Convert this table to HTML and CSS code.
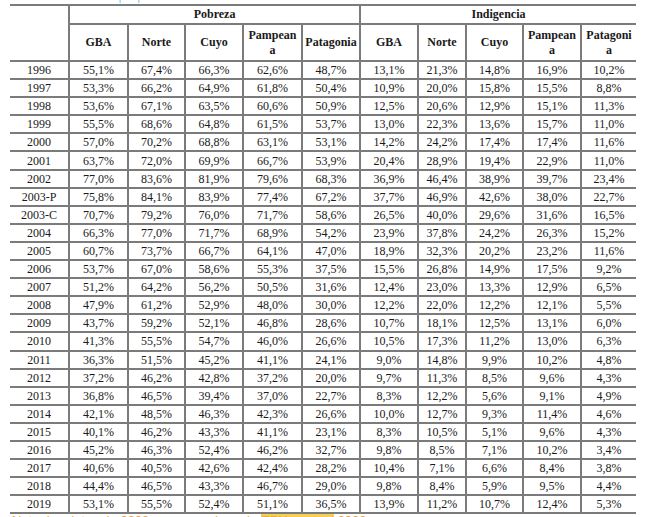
FILE: index.html
```html
<!DOCTYPE html>
<html lang="es">
<head>
<meta charset="utf-8">
<title>Pobreza e Indigencia</title>
<link rel="stylesheet" href="styles.css">
</head>
<body>
<div class="clip-top"><span>Fuente: elaboración propia en base a datos de la EPH - INDEC</span></div>
<table class="data">
<colgroup>
<col style="width:59px"><col style="width:59px"><col style="width:57px"><col style="width:58px"><col style="width:59px"><col style="width:58px">
<col style="width:58px"><col style="width:48px"><col style="width:57px"><col style="width:58px"><col style="width:55px">
</colgroup>
<thead>
<tr class="h1">
<th rowspan="2" class="first"></th>
<th colspan="5">Pobreza</th>
<th colspan="5">Indigencia</th>
</tr>
<tr class="h2">
<th>GBA</th><th>Norte</th><th>Cuyo</th><th>Pampean<br>a</th><th>Patagonia</th>
<th>GBA</th><th>Norte</th><th>Cuyo</th><th>Pampean<br>a</th><th>Patagoni<br>a</th>
</tr>
</thead>
<tbody>
<tr><td class="first">1996</td><td>55,1%</td><td>67,4%</td><td>66,3%</td><td>62,6%</td><td>48,7%</td><td>13,1%</td><td>21,3%</td><td>14,8%</td><td>16,9%</td><td>10,2%</td></tr>
<tr><td class="first">1997</td><td>53,3%</td><td>66,2%</td><td>64,9%</td><td>61,8%</td><td>50,4%</td><td>10,9%</td><td>20,0%</td><td>15,8%</td><td>15,5%</td><td>8,8%</td></tr>
<tr><td class="first">1998</td><td>53,6%</td><td>67,1%</td><td>63,5%</td><td>60,6%</td><td>50,9%</td><td>12,5%</td><td>20,6%</td><td>12,9%</td><td>15,1%</td><td>11,3%</td></tr>
<tr><td class="first">1999</td><td>55,5%</td><td>68,6%</td><td>64,8%</td><td>61,5%</td><td>53,7%</td><td>13,0%</td><td>22,3%</td><td>13,6%</td><td>15,7%</td><td>11,0%</td></tr>
<tr><td class="first">2000</td><td>57,0%</td><td>70,2%</td><td>68,8%</td><td>63,1%</td><td>53,1%</td><td>14,2%</td><td>24,2%</td><td>17,4%</td><td>17,4%</td><td>11,6%</td></tr>
<tr><td class="first">2001</td><td>63,7%</td><td>72,0%</td><td>69,9%</td><td>66,7%</td><td>53,9%</td><td>20,4%</td><td>28,9%</td><td>19,4%</td><td>22,9%</td><td>11,0%</td></tr>
<tr><td class="first">2002</td><td>77,0%</td><td>83,6%</td><td>81,9%</td><td>79,6%</td><td>68,3%</td><td>36,9%</td><td>46,4%</td><td>38,9%</td><td>39,7%</td><td>23,4%</td></tr>
<tr><td class="first">2003-P</td><td>75,8%</td><td>84,1%</td><td>83,9%</td><td>77,4%</td><td>67,2%</td><td>37,7%</td><td>46,9%</td><td>42,6%</td><td>38,0%</td><td>22,7%</td></tr>
<tr><td class="first">2003-C</td><td>70,7%</td><td>79,2%</td><td>76,0%</td><td>71,7%</td><td>58,6%</td><td>26,5%</td><td>40,0%</td><td>29,6%</td><td>31,6%</td><td>16,5%</td></tr>
<tr><td class="first">2004</td><td>66,3%</td><td>77,0%</td><td>71,7%</td><td>68,9%</td><td>54,2%</td><td>23,9%</td><td>37,8%</td><td>24,2%</td><td>26,3%</td><td>15,2%</td></tr>
<tr><td class="first">2005</td><td>60,7%</td><td>73,7%</td><td>66,7%</td><td>64,1%</td><td>47,0%</td><td>18,9%</td><td>32,3%</td><td>20,2%</td><td>23,2%</td><td>11,6%</td></tr>
<tr><td class="first">2006</td><td>53,7%</td><td>67,0%</td><td>58,6%</td><td>55,3%</td><td>37,5%</td><td>15,5%</td><td>26,8%</td><td>14,9%</td><td>17,5%</td><td>9,2%</td></tr>
<tr><td class="first">2007</td><td>51,2%</td><td>64,2%</td><td>56,2%</td><td>50,5%</td><td>31,6%</td><td>12,4%</td><td>23,0%</td><td>13,3%</td><td>12,9%</td><td>6,5%</td></tr>
<tr><td class="first">2008</td><td>47,9%</td><td>61,2%</td><td>52,9%</td><td>48,0%</td><td>30,0%</td><td>12,2%</td><td>22,0%</td><td>12,2%</td><td>12,1%</td><td>5,5%</td></tr>
<tr><td class="first">2009</td><td>43,7%</td><td>59,2%</td><td>52,1%</td><td>46,8%</td><td>28,6%</td><td>10,7%</td><td>18,1%</td><td>12,5%</td><td>13,1%</td><td>6,0%</td></tr>
<tr><td class="first">2010</td><td>41,3%</td><td>55,5%</td><td>54,7%</td><td>46,0%</td><td>26,6%</td><td>10,5%</td><td>17,3%</td><td>11,2%</td><td>13,0%</td><td>6,3%</td></tr>
<tr><td class="first">2011</td><td>36,3%</td><td>51,5%</td><td>45,2%</td><td>41,1%</td><td>24,1%</td><td>9,0%</td><td>14,8%</td><td>9,9%</td><td>10,2%</td><td>4,8%</td></tr>
<tr><td class="first">2012</td><td>37,2%</td><td>46,2%</td><td>42,8%</td><td>37,2%</td><td>20,0%</td><td>9,7%</td><td>11,3%</td><td>8,5%</td><td>9,6%</td><td>4,3%</td></tr>
<tr><td class="first">2013</td><td>36,8%</td><td>46,5%</td><td>39,4%</td><td>37,0%</td><td>22,7%</td><td>8,3%</td><td>12,2%</td><td>5,6%</td><td>9,1%</td><td>4,9%</td></tr>
<tr><td class="first">2014</td><td>42,1%</td><td>48,5%</td><td>46,3%</td><td>42,3%</td><td>26,6%</td><td>10,0%</td><td>12,7%</td><td>9,3%</td><td>11,4%</td><td>4,6%</td></tr>
<tr><td class="first">2015</td><td>40,1%</td><td>46,2%</td><td>43,3%</td><td>41,1%</td><td>23,1%</td><td>8,3%</td><td>10,5%</td><td>5,1%</td><td>9,6%</td><td>4,3%</td></tr>
<tr><td class="first">2016</td><td>45,2%</td><td>46,3%</td><td>52,4%</td><td>46,2%</td><td>32,7%</td><td>9,8%</td><td>8,5%</td><td>7,1%</td><td>10,2%</td><td>3,4%</td></tr>
<tr><td class="first">2017</td><td>40,6%</td><td>40,5%</td><td>42,6%</td><td>42,4%</td><td>28,2%</td><td>10,4%</td><td>7,1%</td><td>6,6%</td><td>8,4%</td><td>3,8%</td></tr>
<tr><td class="first">2018</td><td>44,4%</td><td>46,5%</td><td>43,3%</td><td>46,7%</td><td>29,0%</td><td>9,8%</td><td>8,4%</td><td>5,9%</td><td>9,5%</td><td>4,4%</td></tr>
<tr><td class="first">2019</td><td>53,1%</td><td>55,5%</td><td>52,4%</td><td>51,1%</td><td>36,5%</td><td>13,9%</td><td>11,2%</td><td>10,7%</td><td>12,4%</td><td>5,3%</td></tr>
</tbody>
</table>
<div class="clip-bottom"><span class="note">Nota: los datos de 2003 corresponden a la</span><span class="mark">EPH puntual</span><span class="note"> 2003</span></div>
</body>
</html>
```

FILE: styles.css
```css
html, body {
  margin: 0;
  padding: 0;
  background: #ffffff;
}

body {
  width: 650px;
  height: 517px;
  overflow: hidden;
  font-family: "Liberation Serif", "DejaVu Serif", serif;
  color: #1a1a1a;
}

.clip-top {
  height: 4px;
  overflow: hidden;
}

.clip-top span {
  display: block;
  margin-top: -11px;
  font-family: "Liberation Sans", sans-serif;
  font-size: 13px;
  line-height: 14px;
  color: #8fd0f2;
  white-space: nowrap;
}

.data {
  margin-left: 10px;
  width: 626px;
  table-layout: fixed;
  border-collapse: collapse;
  font-size: 12px;
}

.data th,
.data td {
  padding: 0;
  text-align: center;
  vertical-align: middle;
  border-top: 2px solid #7b7b7b;
  border-bottom: 2px solid #7b7b7b;
  border-left: 2px solid #7b7b7b;
  white-space: nowrap;
  overflow: hidden;
}

.data .first {
  border-left: none;
}

.data th {
  font-weight: bold;
  line-height: 15px;
}

.data tr.h1 {
  height: 19px;
}

.data tr.h2 {
  height: 37px;
}

.data tbody tr {
  height: 18.1px;
}

.data td {
  line-height: 14px;
}

.clip-bottom {
  height: 4px;
  overflow: hidden;
  margin-left: 12px;
  font-family: "Liberation Sans", sans-serif;
  font-size: 13px;
  line-height: 14px;
  color: #e9a84a;
  white-space: nowrap;
}

.clip-bottom .mark {
  background: #f6cf55;
  color: #e9a84a;
  margin-left: 4px;
}
```
